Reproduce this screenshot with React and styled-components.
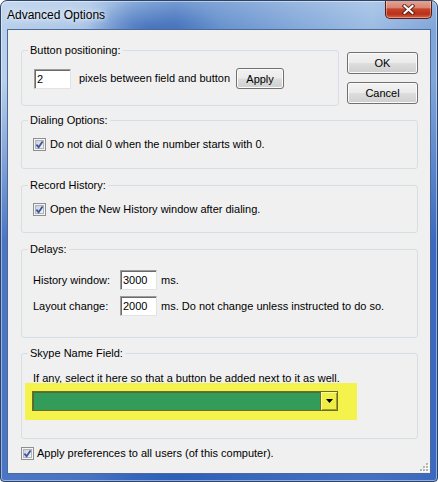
import React from "react";
import styled, { createGlobalStyle } from "styled-components";

const GlobalStyle = createGlobalStyle`
  html, body { margin: 0; padding: 0; background: #ffffff; }
  body { font-family: "Liberation Sans", Arial, sans-serif; font-size: 11px; color: #000; }
  * { box-sizing: border-box; }
`;

const Window = styled.div`
  width: 438px;
  height: 482px;
  display: flex;
  flex-direction: column;
  padding: 0 6px 7px 6px;
  border: 1px solid #2c4468;
  border-radius: 7px 7px 4px 4px;
  background:
    linear-gradient(180deg, rgba(255,255,255,0.18) 0px, rgba(255,255,255,0) 28px),
    linear-gradient(180deg, rgba(30,80,180,0) 0px, rgba(30,80,180,0) 80px, rgba(30,80,180,0.7) 240px, rgba(30,80,180,0.7) 482px),
    radial-gradient(ellipse 70px 26px at 150px 26px, rgba(40,80,170,0.45), rgba(40,80,170,0)),
    linear-gradient(90deg, #b8d0eb 0%, #abc6e7 20%, #6f99d2 30%, #5483c6 40%, #6a94cf 52%, #87abdb 70%, #9dbce3 85%, #7fa5d9 100%);
  box-shadow: inset 0 0 0 1px rgba(255, 255, 255, 0.45);
  overflow: hidden;
`;

const TitleBar = styled.div`
  height: 28px;
  flex: none;
  display: flex;
  justify-content: space-between;
  align-items: flex-start;
`;

const Title = styled.div`
  margin-top: 7px;
  font-family: "Liberation Sans", Arial, sans-serif;
  font-size: 12px;
  line-height: 14px;
  color: #000;
  text-shadow: 0 0 8px rgba(255, 255, 255, 0.95), 0 0 4px rgba(255, 255, 255, 0.8);
`;

const CloseButton = styled.div`
  width: 47px;
  height: 19px;
  margin: -1px -1px 0 0;
  border: 1px solid #5a1d14;
  border-top: none;
  border-radius: 0 0 5px 5px;
  background: linear-gradient(180deg, #e6a898 0%, #d98673 42%, #c6442c 50%, #b93018 78%, #d4654a 100%);
  box-shadow: inset 0 0 0 1px rgba(255, 255, 255, 0.35);
  display: flex;
  align-items: center;
  justify-content: center;
`;

const Client = styled.div`
  position: relative;
  flex: none;
  height: 445px;
  border: 1px solid #4d6a96;
  background: #f0f0f0;
  padding: 13px 12px 0 13px;
  display: flex;
  flex-direction: column;
`;

const TopRow = styled.div`
  display: flex;
  gap: 8px;
  align-items: flex-start;
`;

const Group = styled.div`
  width: ${(p) => p.$w || "100%"};
  height: ${(p) => p.$h}px;
  margin-top: ${(p) => p.$mt}px;
  border: 1px solid #d5dfe5;
  border-radius: 3px;
  padding: 0 11px;
  display: flex;
  flex-direction: column;
  flex: none;
`;

const Legend = styled.div`
  align-self: flex-start;
  margin: -7px 0 0 -5px;
  padding: 0 2px;
  background: #f0f0f0;
  line-height: 13px;
`;

const Row = styled.div`
  display: flex;
  align-items: center;
  height: ${(p) => p.$h || 13}px;
  margin-top: ${(p) => p.$mt || 0}px;
  gap: ${(p) => (p.$gap != null ? p.$gap : 4)}px;
  flex: none;
`;

const Text = styled.span`
  line-height: 13px;
  white-space: nowrap;
  margin-left: ${(p) => p.$ml || 0}px;
`;

const FieldLabel = styled.span`
  width: 87px;
  line-height: 13px;
  white-space: nowrap;
`;

const TextBox = styled.input`
  width: 37px;
  height: 20px;
  margin-left: ${(p) => p.$ml || 0}px;
  padding: 0 2px;
  font-family: "Liberation Sans", Arial, sans-serif;
  font-size: 11px;
  color: #000;
  background: #fff;
  border: 1px solid;
  border-color: #9c9c9c #e3e3e3 #e3e3e3 #9c9c9c;
  box-shadow: inset 1px 1px 0 #6a6a6a;
  outline: none;
`;

const PushButton = styled.button`
  width: ${(p) => p.$w}px;
  height: ${(p) => p.$h}px;
  padding: 0;
  margin-left: ${(p) => p.$ml || 0}px;
  font-family: "Liberation Sans", Arial, sans-serif;
  font-size: 11px;
  color: #000;
  border: 1px solid #707070;
  border-radius: 3px;
  background: linear-gradient(180deg, #f2f2f2 0%, #ebebeb 48%, #dddddd 52%, #cfcfcf 100%);
  box-shadow: inset 0 0 0 1px #fbfbfb;
  flex: none;
`;

const ButtonColumn = styled.div`
  margin-top: 9px;
  display: flex;
  flex-direction: column;
  gap: 8px;
`;

const HintText = styled.div`
  margin-top: 12px;
  line-height: 12px;
  white-space: nowrap;
`;

const Highlight = styled.div`
  width: 332px;
  height: 37px;
  margin: -1px 0 0 -8px;
  padding: 8px 0 0 7px;
  background: #f4f34c;
  flex: none;
`;

const Combo = styled.div`
  display: flex;
  width: 306px;
  height: 20px;
  border: 1px solid #6d6b25;
  background: #349c5a;
`;

const ComboField = styled.div`
  flex: 1;
  box-shadow: inset 1px 1px 0 #4b6f2e;
`;

const ComboArrow = styled.div`
  width: 17px;
  border-left: 1px solid #6d6b25;
  background: #efee45;
  box-shadow: inset 1px 1px 0 #fbfb9e, inset -1px -1px 0 #a09e2c;
  display: flex;
  align-items: center;
  justify-content: center;
`;

const Grip = styled.div`
  position: absolute;
  right: 1px;
  bottom: 1px;
  width: 10px;
  height: 10px;
  line-height: 0;
`;

const CheckBox = () => (
  <svg width="13" height="13" viewBox="0 0 13 13" style={{ flex: "none" }}>
    <defs>
      <linearGradient id="cbfill" x1="0" y1="0" x2="1" y2="1">
        <stop offset="0" stopColor="#c9ced4" />
        <stop offset="1" stopColor="#f6f6f6" />
      </linearGradient>
    </defs>
    <rect x="0.5" y="0.5" width="12" height="12" fill="#f4f4f4" stroke="#8e8f8f" />
    <rect x="2.5" y="2.5" width="8" height="8" fill="url(#cbfill)" stroke="#b0b4ba" />
    <path d="M3.4 6.6 L5.6 9.2 L9.6 3.4" fill="none" stroke="#3a57a0" strokeWidth="1.8" />
  </svg>
);

export default function App() {
  return (
    <>
      <GlobalStyle />
      <Window>
        <TitleBar>
          <Title>Advanced Options</Title>
          <CloseButton>
            <svg width="13" height="11" viewBox="0 0 13 11">
              <path d="M2.5 2 L10.5 9 M10.5 2 L2.5 9" stroke="#4a1a12" strokeWidth="4" strokeLinecap="square" opacity="0.8" />
              <path d="M2.5 2 L10.5 9 M10.5 2 L2.5 9" stroke="#ffffff" strokeWidth="2" strokeLinecap="square" />
            </svg>
          </CloseButton>
        </TitleBar>
        <Client>
          <TopRow>
            <Group $w="318px" $h={56} $mt={7}>
              <Legend>Button positioning:</Legend>
              <Row $h={21} $mt={11} $gap={0}>
                <TextBox $ml={1} readOnly value="2" />
                <Text $ml={8}>pixels between field and button</Text>
                <PushButton $w={48} $h={21} $ml={6}>Apply</PushButton>
              </Row>
            </Group>
            <ButtonColumn>
              <PushButton $w={71} $h={22}>OK</PushButton>
              <PushButton $w={71} $h={22}>Cancel</PushButton>
            </ButtonColumn>
          </TopRow>

          <Group $h={49} $mt={14}>
            <Legend>Dialing Options:</Legend>
            <Row $mt={11}>
              <CheckBox />
              <Text>Do not dial 0 when the number starts with 0.</Text>
            </Row>
          </Group>

          <Group $h={48} $mt={16}>
            <Legend>Record History:</Legend>
            <Row $mt={11}>
              <CheckBox />
              <Text>Open the New History window after dialing.</Text>
            </Row>
          </Group>

          <Group $h={89} $mt={16}>
            <Legend>Delays:</Legend>
            <Row $h={20} $mt={14} $gap={0}>
              <FieldLabel>History window:</FieldLabel>
              <TextBox readOnly value="3000" />
              <Text $ml={4}>ms.</Text>
            </Row>
            <Row $h={20} $mt={6} $gap={0}>
              <FieldLabel>Layout change:</FieldLabel>
              <TextBox readOnly value="2000" />
              <Text $ml={4}>ms. Do not change unless instructed to do so.</Text>
            </Row>
          </Group>

          <Group $h={86} $mt={15}>
            <Legend>Skype Name Field:</Legend>
            <HintText>If any, select it here so that a button be added next to it as well.</HintText>
            <Highlight>
              <Combo>
                <ComboField />
                <ComboArrow>
                  <svg width="7" height="4" viewBox="0 0 7 4">
                    <path d="M0 0 H7 L3.5 4 Z" fill="#000" />
                  </svg>
                </ComboArrow>
              </Combo>
            </Highlight>
          </Group>

          <Row $mt={8} $gap={3}>
            <CheckBox />
            <Text>Apply preferences to all users (of this computer).</Text>
          </Row>

          <Grip>
            <svg width="10" height="10" viewBox="0 0 10 10">
              {[[7, 1], [7, 4], [4, 4], [7, 7], [4, 7], [1, 7]].map(([x, y]) => (
                <g key={`${x}-${y}`}>
                  <rect x={x + 1} y={y + 1} width="2" height="2" fill="#ffffff" />
                  <rect x={x} y={y} width="2" height="2" fill="#b4b4b4" />
                </g>
              ))}
            </svg>
          </Grip>
        </Client>
      </Window>
    </>
  );
}
